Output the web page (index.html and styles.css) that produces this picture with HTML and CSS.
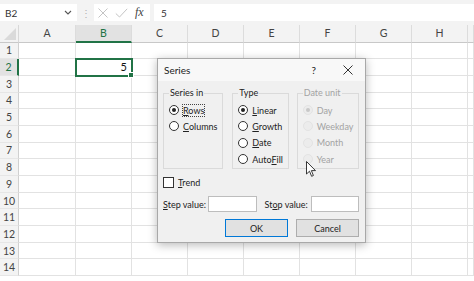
FILE: index.html
```html
<!DOCTYPE html>
<html lang="en">
<head>
  <meta charset="UTF-8">
  <title>Series</title>
  <link rel="stylesheet" href="styles.css">
</head>
<body>
  <div class="formula-bar">
    <div class="name-box">
      <span>B2</span>
      <svg class="chevron" width="8" height="5" viewBox="0 0 8 5"><path d="M1 1 L4 4 L7 1" fill="none" stroke="#555" stroke-width="1.1"/></svg>
    </div>
    <div class="grip">⋮</div>
    <div class="fb-icons">
      <svg width="12" height="10" viewBox="0 0 12 10"><path d="M1.5 0.5 L10.5 9.5 M10.5 0.5 L1.5 9.5" stroke="#c4c4c4" stroke-width="1"/></svg>
      <svg width="13" height="10" viewBox="0 0 13 10"><path d="M0.8 5.5 L4.5 9 L12.2 0.8" fill="none" stroke="#c4c4c4" stroke-width="1"/></svg>
      <span class="fx">fx</span>
    </div>
    <div class="fb-input">5</div>
  </div>

  <div class="sheet">
    <div class="grid" id="grid"></div>

    <div class="dialog">
      <div class="dlg-title">
        <span>Series</span>
        <span class="dlg-help">?</span>
        <svg class="dlg-close" width="10" height="10" viewBox="0 0 10 10"><path d="M0.5 0.5 L9.5 9.5 M9.5 0.5 L0.5 9.5" stroke="#333" stroke-width="1"/></svg>
      </div>
      <div class="dlg-body">
        <div class="groups">
          <fieldset class="group g-series">
            <legend>Series in</legend>
            <label class="radio"><span class="dot on"></span><span class="focus"><u>R</u>ows</span></label>
            <label class="radio"><span class="dot"></span><span><u>C</u>olumns</span></label>
          </fieldset>
          <fieldset class="group g-type">
            <legend>Type</legend>
            <label class="radio"><span class="dot on"></span><span><u>L</u>inear</span></label>
            <label class="radio"><span class="dot"></span><span><u>G</u>rowth</span></label>
            <label class="radio"><span class="dot"></span><span><u>D</u>ate</span></label>
            <label class="radio"><span class="dot"></span><span>Auto<u>F</u>ill</span></label>
          </fieldset>
          <fieldset class="group g-unit disabled">
            <legend>Date unit</legend>
            <label class="radio"><span class="dot on"></span><span>Day</span></label>
            <label class="radio"><span class="dot"></span><span>Weekday</span></label>
            <label class="radio"><span class="dot"></span><span>Month</span></label>
            <label class="radio"><span class="dot"></span><span>Year</span></label>
          </fieldset>
        </div>
        <label class="check"><span class="box"></span><span><u>T</u>rend</span></label>
        <div class="values">
          <span class="val-label"><u>S</u>tep value:</span>
          <span class="val-input"></span>
          <span class="val-label stop">St<u>o</u>p value:</span>
          <span class="val-input"></span>
        </div>
        <div class="buttons">
          <button class="btn default">OK</button>
          <button class="btn">Cancel</button>
        </div>
      </div>
    </div>

    <svg class="cursor" width="11" height="17" viewBox="0 0 11 17"><path d="M0.5 0.5 L0.5 13 L3.5 10.2 L5.6 15.3 L7.4 14.5 L5.4 9.6 L9.5 9.6 Z" fill="#fff" stroke="#222" stroke-width="0.9" stroke-linejoin="round"/></svg>
  </div>

  <script>
    const grid = document.getElementById('grid');
    const cols = ['A', 'B', 'C', 'D', 'E', 'F', 'G', 'H', ''];

    function cell(cls, text) {
      const el = document.createElement('div');
      el.className = cls;
      el.textContent = text || '';
      grid.appendChild(el);
      return el;
    }

    cell('corner');
    cols.forEach(c => cell('col-head' + (c === 'B' ? ' sel' : ''), c));

    for (let r = 1; r <= 14; r++) {
      cell('row-head' + (r === 2 ? ' sel' : ''), r);
      cols.forEach(c => {
        const isActive = r === 2 && c === 'B';
        cell('cell' + (isActive ? ' active' : ''), isActive ? '5' : '');
      });
    }
  </script>
</body>
</html>
```

FILE: styles.css
```css
:root {
  --green: #217346;
  --grid: #e2e2e2;
  --head: #f3f3f3;
  --text: #333;
}
body {
  margin: 0;
  width: 474px;
  height: 281px;
  overflow: hidden;
  background: #fff;
  color: var(--text);
  font-family: Lato, "Open Sans", sans-serif;
}

/* formula bar */
.formula-bar {
  height: 25px;
  box-sizing: border-box;
  padding: 4px 0 4px 0;
  background: var(--head);
  display: flex;
  align-items: stretch;
  font-size: 10px;
}
.name-box {
  width: 77px;
  background: #fff;
  display: flex;
  align-items: center;
  justify-content: space-between;
  padding: 0 5px;
  box-sizing: border-box;
}
.grip {
  width: 17px;
  color: #b0b0b0;
  display: flex;
  align-items: center;
  justify-content: center;
  font-size: 10px;
}
.fb-icons {
  width: 56px;
  background: #fff;
  display: flex;
  align-items: center;
  gap: 6px;
  padding-left: 3px;
  box-sizing: border-box;
}
.fx {
  font-family: "Liberation Serif", serif;
  font-style: italic;
  font-size: 12px;
  color: #444;
  margin-left: 1px;
}
.fb-input {
  flex: 1;
  margin-left: 4px;
  background: #fff;
  padding-left: 7px;
  display: flex;
  align-items: center;
}

/* sheet grid */
.sheet {
  position: relative;
}
.grid {
  display: grid;
  grid-template-columns: 19px 57px repeat(7, 56px) 1fr;
  grid-template-rows: 17.5px;
  grid-auto-rows: 16.7px;
  font-size: 10px;
}
.corner, .col-head, .row-head {
  background: var(--head);
  color: #444;
  box-sizing: border-box;
  display: flex;
  align-items: center;
  justify-content: center;
}
.corner {
  border-bottom: 1px solid #c8c8c8;
  border-right: 1px solid #d8d8d8;
  position: relative;
}
.corner::after {
  content: "";
  position: absolute;
  right: 2px;
  bottom: 2px;
  border-style: solid;
  border-width: 0 0 12px 12px;
  border-color: transparent transparent #dadada transparent;
}
.col-head {
  border-bottom: 1px solid #c8c8c8;
  border-right: 1px solid #dcdcdc;
  font-size: 10.5px;
}
.col-head.sel {
  background: #e2e2e2;
  color: var(--green);
  border-bottom: 2px solid var(--green);
}
.row-head {
  border-right: 1px solid #d0d0d0;
  border-bottom: 1px solid #e6e6e6;
  font-size: 10.5px;
}
.row-head.sel {
  background: #e2e2e2;
  color: var(--green);
  border-right: 2px solid var(--green);
}
.cell {
  border-right: 1px solid var(--grid);
  border-bottom: 1px solid var(--grid);
  box-sizing: border-box;
  font-size: 11px;
  color: #111;
  text-align: right;
  padding-right: 4px;
  line-height: 16px;
}
.cell.active {
  position: relative;
  outline: 2px solid var(--green);
  outline-offset: -1px;
}
.cell.active::after {
  content: "";
  position: absolute;
  right: -3px;
  bottom: -3px;
  width: 4px;
  height: 4px;
  background: var(--green);
  border: 1px solid #fff;
}

/* dialog */
.dialog {
  position: absolute;
  left: 157px;
  top: 33px;
  width: 209px;
  height: 185px;
  box-sizing: border-box;
  background: #f0f0f0;
  border: 1px solid #a8a8a8;
  box-shadow: 0 2px 9px rgba(0,0,0,0.28);
  font-size: 9px;
  color: #222;
  display: flex;
  flex-direction: column;
}
.dlg-title {
  height: 22px;
  background: #f8f8f8;
  display: flex;
  align-items: center;
  padding: 0 12px 0 6px;
  font-size: 10px;
}
.dlg-help {
  margin-left: auto;
  margin-right: 27px;
  font-size: 10px;
}
.dlg-body {
  padding: 6px 6px 0 5px;
  display: flex;
  flex-direction: column;
}
.groups {
  display: flex;
  gap: 9px;
  height: 82px;
}
.group {
  margin: 0;
  padding: 0 0 0 5px;
  border: 1px solid #dadada;
  display: flex;
  flex-direction: column;
  min-width: 0;
  box-sizing: border-box;
}
.group legend {
  padding: 0 1px;
  line-height: 12px;
}
.g-series { width: 61px; }
.g-type { width: 57px; margin-right: -1px; }
.g-unit { width: 63px; }
.radio {
  display: flex;
  align-items: center;
  gap: 4px;
  height: 16.3px;
}
.group legend + .radio {
  margin-top: 3px;
}
.dot {
  width: 10px;
  height: 10px;
  box-sizing: border-box;
  border: 1px solid #333;
  border-radius: 50%;
  background: #fff;
  display: flex;
  align-items: center;
  justify-content: center;
}
.dot.on::after {
  content: "";
  width: 4px;
  height: 4px;
  border-radius: 50%;
  background: #222;
}
.focus {
  outline: 1px dotted #444;
  outline-offset: 0;
}
.disabled {
  color: #a3a3a3;
}
.disabled .dot {
  border-color: #e3e3e3;
  background: #ececec;
}
.disabled .dot.on::after {
  background: #c8c8c8;
}
.check {
  display: flex;
  align-items: center;
  gap: 4px;
  margin-top: 8px;
  height: 11px;
}
.box {
  width: 11px;
  height: 11px;
  box-sizing: border-box;
  border: 1px solid #333;
  background: #fff;
}
.values {
  display: flex;
  align-items: center;
  margin-top: 8px;
  height: 16px;
}
.val-label {
  width: 46px;
}
.val-label.stop {
  margin-left: 8px;
  width: 47px;
}
.val-input {
  width: 49px;
  height: 16px;
  box-sizing: border-box;
  background: #fff;
  border: 1px solid #bdbdbd;
}
.buttons {
  display: flex;
  justify-content: flex-end;
  gap: 8px;
  margin-top: 7px;
}
.btn {
  width: 63px;
  height: 18px;
  padding: 0;
  font: inherit;
  color: #222;
  background: #e1e1e1;
  border: 1px solid #adadad;
}
.btn.default {
  border: 1.5px solid #0078d7;
}

.cursor {
  position: absolute;
  left: 306px;
  top: 136px;
}
```
